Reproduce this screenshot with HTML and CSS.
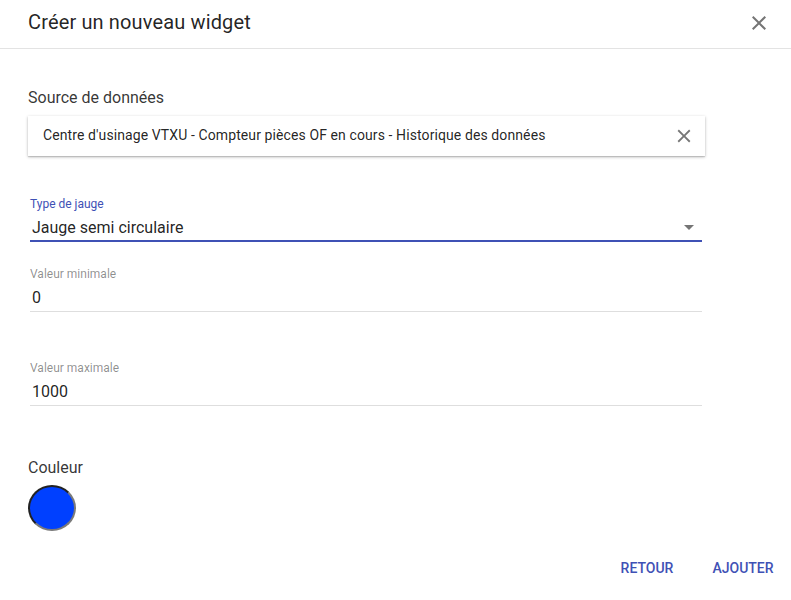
FILE: index.html
```html
<!DOCTYPE html>
<html lang="fr">
<head>
<meta charset="utf-8">
<title>Créer un nouveau widget</title>
<link rel="stylesheet" href="styles.css">
</head>
<body>
<div class="dialog">
  <header class="dialog-header">
    <h1 class="dialog-title">Créer un nouveau widget</h1>
    <button class="icon-btn close-btn" aria-label="Fermer">
      <svg viewBox="0 0 24 24" width="24" height="24"><path d="M19 6.41L17.59 5 12 10.59 6.41 5 5 6.41 10.59 12 5 17.59 6.41 19 12 13.41 17.59 19 19 17.59 13.41 12z"/></svg>
    </button>
  </header>
  <main class="dialog-content">
    <div class="section-label">Source de données</div>
    <div class="chip">
      <span class="chip-text">Centre d'usinage VTXU - Compteur pièces OF en cours - Historique des données</span>
      <span class="chip-remove">
        <svg viewBox="0 0 24 24" width="22" height="22"><path d="M19 6.41L17.59 5 12 10.59 6.41 5 5 6.41 10.59 12 5 17.59 6.41 19 12 13.41 17.59 19 19 17.59 13.41 12z"/></svg>
      </span>
    </div>

    <div class="field field-select">
      <label class="field-label focused">Type de jauge</label>
      <div class="field-value select-value">
        <span>Jauge semi circulaire</span>
        <span class="select-arrow"></span>
      </div>
    </div>

    <div class="field field-input field-min">
      <label class="field-label">Valeur minimale</label>
      <div class="field-value">0</div>
    </div>

    <div class="field field-input field-max">
      <label class="field-label">Valeur maximale</label>
      <div class="field-value">1000</div>
    </div>

    <div class="section-label color-label">Couleur</div>
    <div class="color-swatch"></div>
  </main>
  <footer class="dialog-actions">
    <button class="text-btn">Retour</button>
    <button class="text-btn">Ajouter</button>
  </footer>
</div>
</body>
</html>
```

FILE: styles.css
```css
* { box-sizing: border-box; }
html, body { margin: 0; padding: 0; background: #fff; }
body {
  font-family: Roboto, "Liberation Sans", Arial, sans-serif;
  color: rgba(0,0,0,.87);
  width: 791px;
  height: 600px;
  overflow: hidden;
}
.dialog { display: flex; flex-direction: column; }
.dialog-header {
  height: 49px;
  border-bottom: 1px solid #e3e3e3;
  display: flex;
  align-items: flex-start;
  justify-content: space-between;
  padding: 10px 20px 0 28px;
}
.dialog-title {
  margin: 0;
  font-size: 20px;
  line-height: 24px;
  font-weight: 400;
  letter-spacing: 0.14px;
  color: rgba(0,0,0,.87);
}
.icon-btn {
  border: 0;
  background: none;
  padding: 0;
  margin: 0;
  display: flex;
  cursor: pointer;
}
.close-btn { margin-top: 0.5px; }
.close-btn svg { fill: #757575; }

.dialog-content {
  padding: 39px 28px 0 28px;
  display: flex;
  flex-direction: column;
  align-items: flex-start;
}
.section-label {
  font-size: 16px;
  line-height: 20px;
  color: rgba(0,0,0,.8);
}
.chip {
  margin-top: 8px;
  width: 677px;
  height: 40px;
  display: flex;
  align-items: center;
  justify-content: space-between;
  padding: 0 10px 0 15px;
  background: #fff;
  box-shadow: 0 1px 3px rgba(0,0,0,.25), 0 1px 1px rgba(0,0,0,.12);
}
.chip-text {
  font-size: 14px;
  line-height: 20px;
  letter-spacing: 0.1px;
  color: rgba(0,0,0,.87);
  margin-top: -2px;
}
.chip-remove { display: flex; margin-top: -1px; }
.chip-remove svg { fill: #777; }

.field {
  margin-left: 2px;
  width: 672px;
  display: flex;
  flex-direction: column;
}
.field-label {
  font-size: 12px;
  line-height: 14px;
  color: rgba(0,0,0,.45);
}
.field-label.focused { color: #3f51b5; }
.field-value {
  font-size: 16px;
  line-height: 20px;
  color: rgba(0,0,0,.87);
  padding-left: 2px;
}
.field-select { margin-top: 41px; }
.field-select .field-label { margin-bottom: 7px; }
.select-value {
  display: flex;
  align-items: center;
  justify-content: space-between;
  padding-right: 8px;
  padding-bottom: 2px;
  border-bottom: 2px solid #3f51b5;
}
.select-arrow {
  width: 0;
  height: 0;
  margin-top: -1px;
  border-left: 5px solid transparent;
  border-right: 5px solid transparent;
  border-top: 5px solid #757575;
}
.field-input .field-label { margin-bottom: 7px; }
.field-input .field-value {
  padding-bottom: 3px;
  border-bottom: 1px solid #dedede;
}
.field-min { margin-top: 25px; }
.field-max { margin-top: 49px; }

.color-label { margin-top: 52px; }
.color-swatch {
  margin-top: 7px;
  width: 48px;
  height: 46px;
  border-radius: 50%;
  background: #0040ff;
  border: 2px solid;
  border-color: #222 #7a7a7a #7a7a7a #222;
}

.dialog-actions {
  display: flex;
  justify-content: flex-end;
  gap: 8px;
  padding: 19px 4px 0 0;
}
.text-btn {
  min-width: 88px;
  height: 36px;
  line-height: 36px;
  padding: 0 8px;
  border: 0;
  background: none;
  font-family: Roboto, "Liberation Sans", Arial, sans-serif;
  font-size: 14px;
  font-weight: 500;
  text-transform: uppercase;
  color: #3f51b5;
  cursor: pointer;
}
```
